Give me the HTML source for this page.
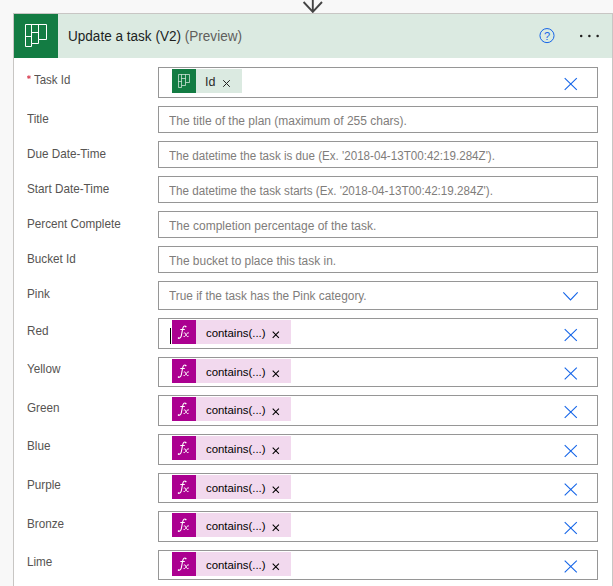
<!DOCTYPE html>
<html><head><meta charset="utf-8">
<style>
html,body{margin:0;padding:0;}
body{width:613px;height:586px;overflow:hidden;background:#f8f8f8;position:relative;font-family:"Liberation Sans",sans-serif;}
.a{position:absolute;}
.card{left:13px;top:13px;width:598px;height:600px;border:1px solid #c8c6c4;background:#fff;}
.hdr{left:14px;top:14px;width:598px;height:44px;background:#dbeae1;}
.logo{left:14px;top:14px;width:44px;height:44px;background:#137c43;}
.ttl{left:68px;top:28px;font-size:14px;line-height:16px;color:#201f1e;white-space:pre;transform:scaleX(0.968);transform-origin:0 0;}
.ttl span{color:#605e5c;}
.lbl{left:27px;font-size:12.4px;line-height:14px;color:#565452;white-space:pre;transform:scaleX(0.945);transform-origin:0 0;}
.box{left:158px;width:438px;border:1px solid #969696;background:#fff;}
.ph{left:169px;font-size:12.3px;line-height:14px;color:#7f7d7b;white-space:pre;transform:scaleX(0.975);transform-origin:0 0;}
.tokp{left:172px;width:70px;height:24px;background:#dbeae1;}
.tokf{left:172px;width:119px;height:24px;background:#f2d9ee;}
.fxi{left:0;top:0;width:24px;height:24px;background:#ab0090;}
.tt{font-size:11.4px;line-height:14px;color:#000;white-space:pre;}
</style></head><body>
<!-- arrow -->
<svg class="a" style="left:300px;top:0" width="26" height="14" viewBox="0 0 26 14">
<path d="M12.8 0 V12 M3.6 2 L12.8 11.8 L22 2" fill="none" stroke="#444" stroke-width="1.9"/>
</svg>
<div class="a card"></div>
<div class="a hdr"></div>
<div class="a logo">
<svg width="44" height="44" viewBox="0 0 44 44"><path d="M11.5 10.5 H32.5 V25.5 H24.5 V29.5 H17.5 V32.5 H11.5 Z M17.5 10.5 V29.5 M24.5 10.5 V25.5 M11.5 22.5 H17.5 M17.5 18.5 H24.5" fill="none" stroke="#fff" stroke-width="1"/></svg>
</div>
<div class="a ttl">Update a task (V2) <span>(Preview)</span></div>
<svg class="a" style="left:538px;top:27px" width="18" height="18" viewBox="0 0 18 18">
<circle cx="9" cy="8.6" r="7.05" fill="none" stroke="#1565e8" stroke-width="1"/>
<text x="9" y="12.6" text-anchor="middle" font-family="Liberation Sans" font-size="11" fill="#1565e8">?</text>
</svg>

<svg class="a" style="left:575px;top:30px" width="30" height="12" viewBox="0 0 30 12"><circle cx="6.2" cy="5.9" r="1.25" fill="#201f1e"/><circle cx="14.4" cy="5.9" r="1.25" fill="#201f1e"/><circle cx="22.6" cy="5.9" r="1.25" fill="#201f1e"/></svg>
<!-- Task Id -->
<svg class="a" style="left:26px;top:74px" width="6" height="6" viewBox="0 0 6 6"><path d="M2.9 1.2 V5 M1.1 2.2 L4.7 4 M4.7 2.2 L1.1 4" stroke="#d83b50" stroke-width="0.9"/></svg>
<div class="a lbl" style="top:73px;left:33.5px;transform:scaleX(0.925)">Task Id</div>
<div class="a box" style="top:67px;height:29px"></div>
<div class="a tokp" style="top:69px">
 <div class="a" style="left:0;top:0;width:24px;height:24px;background:#137c43">
 <svg width="24" height="24" viewBox="0 0 24 24"><path d="M6.5 5.5 H17.5 V13.5 H13.5 V16.5 H9.5 V18.5 H6.5 Z M9.5 5.5 V16.5 M13.5 5.5 V13.5 M6.5 12.5 H9.5 M9.5 9.5 H13.5" fill="none" stroke="#fff" stroke-width="0.8" opacity=".78"/></svg>
 </div>
 <div class="a tt" style="left:33px;top:6px;font-size:12.5px;color:#2b2a29">Id</div>
 <svg class="a" style="left:50px;top:10px" width="9" height="9" viewBox="0 0 9 9"><path d="M1.2 1.2 L7.8 7.8 M7.8 1.2 L1.2 7.8" stroke="#201f1e" stroke-width="1.0"/></svg>
</div>
<svg class="a" style="left:563px;top:77px" width="15" height="15" viewBox="0 0 15 15"><path d="M1.7 1.2 L13.8 12.9 M13.8 1.2 L1.7 12.9" stroke="#1565e8" stroke-width="1.1"/></svg>

<!-- text rows -->
<div class="a lbl" style="top:112px">Title</div>
<div class="a box" style="top:106px;height:25px"></div>
<div class="a ph" style="top:114px">The title of the plan (maximum of 255 chars).</div>

<div class="a lbl" style="top:147px">Due Date-Time</div>
<div class="a box" style="top:141px;height:25px"></div>
<div class="a ph" style="top:149px;transform:scaleX(0.9445)">The datetime the task is due (Ex. '2018-04-13T00:42:19.284Z').</div>

<div class="a lbl" style="top:182px">Start Date-Time</div>
<div class="a box" style="top:176px;height:25px"></div>
<div class="a ph" style="top:184px;transform:scaleX(0.946)">The datetime the task starts (Ex. '2018-04-13T00:42:19.284Z').</div>

<div class="a lbl" style="top:217px">Percent Complete</div>
<div class="a box" style="top:211px;height:25px"></div>
<div class="a ph" style="top:219px">The completion percentage of the task.</div>

<div class="a lbl" style="top:252px">Bucket Id</div>
<div class="a box" style="top:246px;height:25px"></div>
<div class="a ph" style="top:254px;transform:scaleX(0.970)">The bucket to place this task in.</div>

<div class="a lbl" style="top:287px">Pink</div>
<div class="a box" style="top:281px;height:27px"></div>
<div class="a ph" style="top:289px;transform:scaleX(0.964)">True if the task has the Pink category.</div>
<svg class="a" style="left:562px;top:291px" width="18" height="11" viewBox="0 0 18 11"><path d="M1.3 1.4 L8.5 8.9 L15.7 1.4" fill="none" stroke="#1565e8" stroke-width="1.1"/></svg>

<div class="a lbl" style="top:324px">Red</div>
<div class="a box" style="top:318px;height:29px"></div>
<div class="a" style="left:170px;top:328px;width:1px;height:16px;background:#000"></div>
<div class="a tokf" style="top:320px"><div class="a fxi"><svg width="24" height="24" viewBox="0 0 24 24" fill="none" stroke="#fff" stroke-linecap="round"><path d="M13.6 6.4 C12.3 5.5 11.1 6.6 10.6 9.2 L9.4 15.4 C9 17.6 8 18.5 6.6 18.2 M8.7 9.4 H12.4" stroke-width="1.05"/><path d="M12.1 13 C13.2 12.4 13.6 13.3 14.1 14.8 C14.6 16.3 15.2 16.9 16.2 16.5 M16.5 12.8 C15.4 12.5 14.5 13.9 13.8 15.2 C13.3 16.2 12.7 16.9 11.9 16.6" stroke-width="0.95"/><circle cx="13.7" cy="6.5" r="0.85" fill="#fff" stroke="none"/><circle cx="6.6" cy="18" r="0.85" fill="#fff" stroke="none"/></svg></div><div class="a tt" style="left:34px;top:6px">contains(...)</div><svg class="a" style="left:100px;top:11px" width="8" height="8" viewBox="0 0 8 8"><path d="M0.7 0.7 L6.9 6.9 M6.9 0.7 L0.7 6.9" stroke="#000" stroke-width="1.05"/></svg></div>
<svg class="a" style="left:563px;top:328px" width="15" height="15" viewBox="0 0 15 15"><path d="M1.7 1.2 L13.8 12.9 M13.8 1.2 L1.7 12.9" stroke="#1565e8" stroke-width="1.1"/></svg>
<div class="a lbl" style="top:362px">Yellow</div>
<div class="a box" style="top:357px;height:28px"></div>
<div class="a tokf" style="top:359px"><div class="a fxi"><svg width="24" height="24" viewBox="0 0 24 24" fill="none" stroke="#fff" stroke-linecap="round"><path d="M13.6 6.4 C12.3 5.5 11.1 6.6 10.6 9.2 L9.4 15.4 C9 17.6 8 18.5 6.6 18.2 M8.7 9.4 H12.4" stroke-width="1.05"/><path d="M12.1 13 C13.2 12.4 13.6 13.3 14.1 14.8 C14.6 16.3 15.2 16.9 16.2 16.5 M16.5 12.8 C15.4 12.5 14.5 13.9 13.8 15.2 C13.3 16.2 12.7 16.9 11.9 16.6" stroke-width="0.95"/><circle cx="13.7" cy="6.5" r="0.85" fill="#fff" stroke="none"/><circle cx="6.6" cy="18" r="0.85" fill="#fff" stroke="none"/></svg></div><div class="a tt" style="left:34px;top:6px">contains(...)</div><svg class="a" style="left:100px;top:11px" width="8" height="8" viewBox="0 0 8 8"><path d="M0.7 0.7 L6.9 6.9 M6.9 0.7 L0.7 6.9" stroke="#000" stroke-width="1.05"/></svg></div>
<svg class="a" style="left:563px;top:367px" width="15" height="15" viewBox="0 0 15 15"><path d="M1.7 0.6 L13.8 12.3 M13.8 0.6 L1.7 12.3" stroke="#1565e8" stroke-width="1.1"/></svg>
<div class="a lbl" style="top:401px">Green</div>
<div class="a box" style="top:395px;height:29px"></div>
<div class="a tokf" style="top:397px"><div class="a fxi"><svg width="24" height="24" viewBox="0 0 24 24" fill="none" stroke="#fff" stroke-linecap="round"><path d="M13.6 6.4 C12.3 5.5 11.1 6.6 10.6 9.2 L9.4 15.4 C9 17.6 8 18.5 6.6 18.2 M8.7 9.4 H12.4" stroke-width="1.05"/><path d="M12.1 13 C13.2 12.4 13.6 13.3 14.1 14.8 C14.6 16.3 15.2 16.9 16.2 16.5 M16.5 12.8 C15.4 12.5 14.5 13.9 13.8 15.2 C13.3 16.2 12.7 16.9 11.9 16.6" stroke-width="0.95"/><circle cx="13.7" cy="6.5" r="0.85" fill="#fff" stroke="none"/><circle cx="6.6" cy="18" r="0.85" fill="#fff" stroke="none"/></svg></div><div class="a tt" style="left:34px;top:6px">contains(...)</div><svg class="a" style="left:100px;top:11px" width="8" height="8" viewBox="0 0 8 8"><path d="M0.7 0.7 L6.9 6.9 M6.9 0.7 L0.7 6.9" stroke="#000" stroke-width="1.05"/></svg></div>
<svg class="a" style="left:563px;top:405px" width="15" height="15" viewBox="0 0 15 15"><path d="M1.7 1.2 L13.8 12.9 M13.8 1.2 L1.7 12.9" stroke="#1565e8" stroke-width="1.1"/></svg>
<div class="a lbl" style="top:439px">Blue</div>
<div class="a box" style="top:434px;height:29px"></div>
<div class="a tokf" style="top:436px"><div class="a fxi"><svg width="24" height="24" viewBox="0 0 24 24" fill="none" stroke="#fff" stroke-linecap="round"><path d="M13.6 6.4 C12.3 5.5 11.1 6.6 10.6 9.2 L9.4 15.4 C9 17.6 8 18.5 6.6 18.2 M8.7 9.4 H12.4" stroke-width="1.05"/><path d="M12.1 13 C13.2 12.4 13.6 13.3 14.1 14.8 C14.6 16.3 15.2 16.9 16.2 16.5 M16.5 12.8 C15.4 12.5 14.5 13.9 13.8 15.2 C13.3 16.2 12.7 16.9 11.9 16.6" stroke-width="0.95"/><circle cx="13.7" cy="6.5" r="0.85" fill="#fff" stroke="none"/><circle cx="6.6" cy="18" r="0.85" fill="#fff" stroke="none"/></svg></div><div class="a tt" style="left:34px;top:6px">contains(...)</div><svg class="a" style="left:100px;top:11px" width="8" height="8" viewBox="0 0 8 8"><path d="M0.7 0.7 L6.9 6.9 M6.9 0.7 L0.7 6.9" stroke="#000" stroke-width="1.05"/></svg></div>
<svg class="a" style="left:563px;top:444px" width="15" height="15" viewBox="0 0 15 15"><path d="M1.7 1.2 L13.8 12.9 M13.8 1.2 L1.7 12.9" stroke="#1565e8" stroke-width="1.1"/></svg>
<div class="a lbl" style="top:478px">Purple</div>
<div class="a box" style="top:473px;height:28px"></div>
<div class="a tokf" style="top:475px"><div class="a fxi"><svg width="24" height="24" viewBox="0 0 24 24" fill="none" stroke="#fff" stroke-linecap="round"><path d="M13.6 6.4 C12.3 5.5 11.1 6.6 10.6 9.2 L9.4 15.4 C9 17.6 8 18.5 6.6 18.2 M8.7 9.4 H12.4" stroke-width="1.05"/><path d="M12.1 13 C13.2 12.4 13.6 13.3 14.1 14.8 C14.6 16.3 15.2 16.9 16.2 16.5 M16.5 12.8 C15.4 12.5 14.5 13.9 13.8 15.2 C13.3 16.2 12.7 16.9 11.9 16.6" stroke-width="0.95"/><circle cx="13.7" cy="6.5" r="0.85" fill="#fff" stroke="none"/><circle cx="6.6" cy="18" r="0.85" fill="#fff" stroke="none"/></svg></div><div class="a tt" style="left:34px;top:6px">contains(...)</div><svg class="a" style="left:100px;top:11px" width="8" height="8" viewBox="0 0 8 8"><path d="M0.7 0.7 L6.9 6.9 M6.9 0.7 L0.7 6.9" stroke="#000" stroke-width="1.05"/></svg></div>
<svg class="a" style="left:563px;top:483px" width="15" height="15" viewBox="0 0 15 15"><path d="M1.7 0.6 L13.8 12.3 M13.8 0.6 L1.7 12.3" stroke="#1565e8" stroke-width="1.1"/></svg>
<div class="a lbl" style="top:517px">Bronze</div>
<div class="a box" style="top:511px;height:29px"></div>
<div class="a tokf" style="top:513px"><div class="a fxi"><svg width="24" height="24" viewBox="0 0 24 24" fill="none" stroke="#fff" stroke-linecap="round"><path d="M13.6 6.4 C12.3 5.5 11.1 6.6 10.6 9.2 L9.4 15.4 C9 17.6 8 18.5 6.6 18.2 M8.7 9.4 H12.4" stroke-width="1.05"/><path d="M12.1 13 C13.2 12.4 13.6 13.3 14.1 14.8 C14.6 16.3 15.2 16.9 16.2 16.5 M16.5 12.8 C15.4 12.5 14.5 13.9 13.8 15.2 C13.3 16.2 12.7 16.9 11.9 16.6" stroke-width="0.95"/><circle cx="13.7" cy="6.5" r="0.85" fill="#fff" stroke="none"/><circle cx="6.6" cy="18" r="0.85" fill="#fff" stroke="none"/></svg></div><div class="a tt" style="left:34px;top:6px">contains(...)</div><svg class="a" style="left:100px;top:11px" width="8" height="8" viewBox="0 0 8 8"><path d="M0.7 0.7 L6.9 6.9 M6.9 0.7 L0.7 6.9" stroke="#000" stroke-width="1.05"/></svg></div>
<svg class="a" style="left:563px;top:521px" width="15" height="15" viewBox="0 0 15 15"><path d="M1.7 1.2 L13.8 12.9 M13.8 1.2 L1.7 12.9" stroke="#1565e8" stroke-width="1.1"/></svg>
<div class="a lbl" style="top:555px">Lime</div>
<div class="a box" style="top:550px;height:28px"></div>
<div class="a tokf" style="top:552px"><div class="a fxi"><svg width="24" height="24" viewBox="0 0 24 24" fill="none" stroke="#fff" stroke-linecap="round"><path d="M13.6 6.4 C12.3 5.5 11.1 6.6 10.6 9.2 L9.4 15.4 C9 17.6 8 18.5 6.6 18.2 M8.7 9.4 H12.4" stroke-width="1.05"/><path d="M12.1 13 C13.2 12.4 13.6 13.3 14.1 14.8 C14.6 16.3 15.2 16.9 16.2 16.5 M16.5 12.8 C15.4 12.5 14.5 13.9 13.8 15.2 C13.3 16.2 12.7 16.9 11.9 16.6" stroke-width="0.95"/><circle cx="13.7" cy="6.5" r="0.85" fill="#fff" stroke="none"/><circle cx="6.6" cy="18" r="0.85" fill="#fff" stroke="none"/></svg></div><div class="a tt" style="left:34px;top:6px">contains(...)</div><svg class="a" style="left:100px;top:11px" width="8" height="8" viewBox="0 0 8 8"><path d="M0.7 0.7 L6.9 6.9 M6.9 0.7 L0.7 6.9" stroke="#000" stroke-width="1.05"/></svg></div>
<svg class="a" style="left:563px;top:560px" width="15" height="15" viewBox="0 0 15 15"><path d="M1.7 0.6 L13.8 12.3 M13.8 0.6 L1.7 12.3" stroke="#1565e8" stroke-width="1.1"/></svg>
</body></html>
